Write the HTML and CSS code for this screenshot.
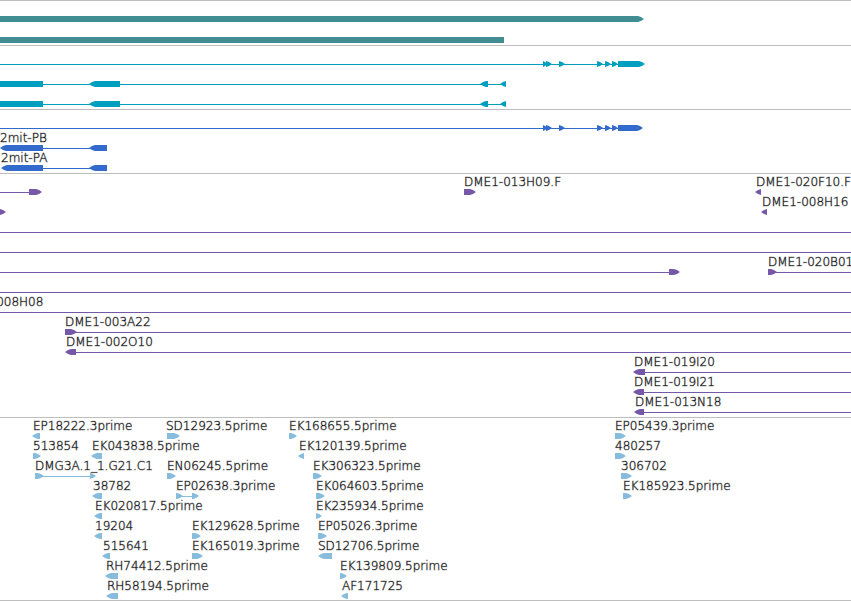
FILE: index.html
```html
<!DOCTYPE html>
<html lang="en">
<head>
<meta charset="utf-8">
<title>Genome tracks</title>
<link rel="stylesheet" href="styles.css">
</head>
<body>
<main class="tracks">
  <section class="track track-gene"></section>
  <section class="track track-transcript"></section>
  <section class="track track-protein"></section>
  <section class="track track-clone"></section>
  <section class="track track-est"></section>
</main>
<script src="tracks.js"></script>
</body>
</html>
```
FILE: styles.css
```css
body {
  margin: 0;
  background: #fff;
  color: #000;
  font-family: "DejaVu Sans", sans-serif;
  font-size: 12px;
}

.tracks {
  border-bottom: 1px solid #bebebe;
  overflow: hidden;
}

.track {
  border-top: 1px solid #bebebe;
}

.track svg {
  display: block;
  width: 100%;
}

.track text {
  fill: #000;
  font-weight: 200;
  paint-order: stroke;
  stroke: #000;
  stroke-opacity: 0.35;
  stroke-width: 1px;
}

.track-gene {
  fill: #408d92;
}

.track-transcript {
  fill: #009fbf;
}

.track-protein {
  fill: #336bcc;
}

.track-clone {
  fill: #7658a8;
}

.track-est {
  fill: #87bcdc;
}
```
FILE: tracks.js
```
const NS = "http://www.w3.org/2000/svg";
const END = "100%";

// Feature: [row, label, label x, lines [from, to], blocks [from, to, direction]]
const exons = tip => [
  [543, 548, ">"], [546, 552, ">"], [559, 565, ">"], [597, 603, ">"],
  [605, 611, ">"], [612, 618, ">"], [618, tip, ">"]
];
const block = (row, label, x, from, to, dir) => [row, label, x, [], [[from, to, dir]]];

const tracks = {
  "track-gene": { height: 44, first: 18, step: 21, features: [
    [0, "", 0, [], [[0, 644, ">"]]],
    [1, "", 0, [], [[0, 504, ""]]]
  ]},
  "track-transcript": { height: 63, first: 18, step: 20, features: [
    [0, "", 0, [[0, 618]], exons(645)],
    [1, "", 0, [[43, 506]], [[0, 43, ""], [89, 120, "<"], [480, 488, "<"], [500, 506, "<"]]],
    [2, "", 0, [[43, 506]], [[0, 43, ""], [89, 120, "<"], [480, 488, "<"], [500, 506, "<"]]]
  ]},
  "track-protein": { height: 63, first: 18, step: 20, features: [
    [0, "", 0, [[0, 618]], exons(643)],
    [1, "2mit-PB", 0, [[43, 95]], [[0, 43, "<"], [89, 107, "<"]]],
    [2, "2mit-PA", 1, [[43, 95]], [[1, 43, "<"], [89, 107, "<"]]]
  ]},
  "track-clone": { height: 243, first: 18, step: 20, features: [
    [0, "", 0, [[0, 29]], [[29, 42, ">"]]],
    block(0, "DME1-013H09.F", 464, 464, 476, ">"),
    block(0, "DME1-020F10.F", 756, 755, 761, "<"),
    block(1, "", 0, -3, 6, ">"),
    block(1, "DME1-008H16", 762, 761, 767, "<"),
    [2, "", 0, [[0, END]], []],
    [3, "", 0, [[0, END]], []],
    [4, "", 0, [[0, 672]], [[669, 680, ">"]]],
    [4, "DME1-020B01", 768, [[770, END]], [[768, 777, ">"]]],
    [5, "", 0, [[0, END]], []],
    [6, "DME1-008H08", -43, [[0, END]], []],
    [7, "DME1-003A22", 65, [[70, END]], [[65, 77, ">"]]],
    [8, "DME1-002O10", 66, [[72, END]], [[65, 76, "<"]]],
    [9, "DME1-019I20", 634, [[640, END]], [[633, 645, "<"]]],
    [10, "DME1-019I21", 634, [[640, END]], [[633, 644, "<"]]],
    [11, "DME1-013N18", 635, [[640, END]], [[634, 644, "<"]]]
  ]},
  "track-est": { height: 182, first: 18, step: 20, features: [
    block(0, "EP18222.3prime", 33, 32, 40, "<"),
    block(0, "SD12923.5prime", 166, 167, 180, ">"),
    block(0, "EK168655.5prime", 289, 289, 297, ">"),
    block(0, "EP05439.3prime", 615, 615, 626, ">"),
    block(1, "513854", 33, 33, 41, ">"),
    block(1, "EK043838.5prime", 92, 91, 102, "<"),
    block(1, "EK120139.5prime", 299, 298, 304, "<"),
    block(1, "480257", 615, 615, 626, ">"),
    [2, "DMG3A.1_1.G21.C1", 35, [[38, 92]], [[35, 44, ">"], [90, 96, ">"]]],
    block(2, "EN06245.5prime", 167, 167, 176, ">"),
    block(2, "EK306323.5prime", 313, 313, 322, ">"),
    block(2, "306702", 621, 621, 632, ">"),
    block(3, "38782", 93, 92, 102, "<"),
    [3, "EP02638.3prime", 176, [[178, 195]], [[176, 183, ">"], [192, 199, ">"]]],
    block(3, "EK064603.5prime", 316, 316, 325, ">"),
    block(3, "EK185923.5prime", 623, 623, 632, ">"),
    block(4, "EK020817.5prime", 95, 94, 102, "<"),
    block(4, "EK235934.5prime", 316, 316, 322, ">"),
    block(5, "19204", 95, 94, 102, "<"),
    block(5, "EK129628.5prime", 192, 192, 201, ">"),
    block(5, "EP05026.3prime", 318, 318, 327, ">"),
    block(6, "515641", 103, 102, 110, "<"),
    block(6, "EK165019.3prime", 192, 192, 203, ">"),
    block(6, "SD12706.5prime", 318, 318, 332, "<"),
    block(7, "RH74412.5prime", 106, 105, 118, "<"),
    block(7, "EK139809.5prime", 340, 340, 347, ">"),
    block(8, "RH58194.5prime", 107, 106, 118, "<"),
    block(8, "AF171725", 342, 341, 348, "<")
  ]}
};

function add(parent, name, attributes) {
  const node = document.createElementNS(NS, name);
  for (const key in attributes) node.setAttribute(key, attributes[key]);
  return parent.appendChild(node);
}

// A block is six pixels tall, with a rounded tip of up to six pixels at its leading end.
function shape(from, to, dir, y) {
  const tip = Math.min(6, to - from);
  const top = y - 3, bottom = y + 3;
  if (dir === ">") {
    return `${from},${top} ${to - tip},${top} ${to - 3},${y - 2} ${to},${y} ${to - 3},${y + 2} ${to - tip},${bottom} ${from},${bottom}`;
  }
  if (dir === "<") {
    return `${to},${top} ${from + tip},${top} ${from + 3},${y - 2} ${from},${y} ${from + 3},${y + 2} ${from + tip},${bottom} ${to},${bottom}`;
  }
  return `${from},${top} ${to},${top} ${to},${bottom} ${from},${bottom}`;
}

for (const [name, track] of Object.entries(tracks)) {
  const svg = add(document.querySelector("." + name), "svg", { height: track.height });
  for (const [row, label, x, lines, blocks] of track.features) {
    const y = track.first + row * track.step;
    for (const [from, to] of lines) {
      add(svg, "line", { x1: from, x2: to, y1: y + 0.5, y2: y + 0.5, stroke: getComputedStyle(svg).fill });
    }
    for (const [from, to, dir] of blocks) {
      add(svg, "polygon", { points: shape(from, to, dir, y) });
    }
    if (label) add(svg, "text", { x, y: y - 6 }).textContent = label;
  }
}
```
